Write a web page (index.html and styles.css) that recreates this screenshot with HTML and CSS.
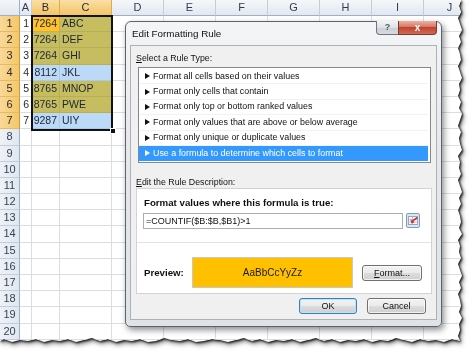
FILE: index.html
```html
<!DOCTYPE html>
<html>
<head>
<meta charset="utf-8">
<link rel="stylesheet" href="styles.css">
</head>
<body>
<div class="page">
  <div class="torn">
    <div class="sheet">
      <div class="grid">
        <div class="corner"></div><div class="ch">A</div><div class="ch sel">B</div><div class="ch sel">C</div><div class="ch">D</div><div class="ch">E</div><div class="ch">F</div><div class="ch">G</div><div class="ch">H</div><div class="ch">I</div><div class="ch">J</div>

        <div class="rh sel">1</div><div class="c n">1</div><div class="c n hi">7264</div><div class="c t ol">ABC</div><div class="c"></div><div class="c"></div><div class="c"></div><div class="c"></div><div class="c"></div><div class="c"></div><div class="c"></div>
        <div class="rh sel">2</div><div class="c n">2</div><div class="c n ol">7264</div><div class="c t ol">DEF</div><div class="c"></div><div class="c"></div><div class="c"></div><div class="c"></div><div class="c"></div><div class="c"></div><div class="c"></div>
        <div class="rh sel">3</div><div class="c n">3</div><div class="c n ol">7264</div><div class="c t ol">GHI</div><div class="c"></div><div class="c"></div><div class="c"></div><div class="c"></div><div class="c"></div><div class="c"></div><div class="c"></div>
        <div class="rh sel">4</div><div class="c n">4</div><div class="c n bl">8112</div><div class="c t bl">JKL</div><div class="c"></div><div class="c"></div><div class="c"></div><div class="c"></div><div class="c"></div><div class="c"></div><div class="c"></div>
        <div class="rh sel">5</div><div class="c n">5</div><div class="c n ol">8765</div><div class="c t ol">MNOP</div><div class="c"></div><div class="c"></div><div class="c"></div><div class="c"></div><div class="c"></div><div class="c"></div><div class="c"></div>
        <div class="rh sel">6</div><div class="c n">6</div><div class="c n ol">8765</div><div class="c t ol">PWE</div><div class="c"></div><div class="c"></div><div class="c"></div><div class="c"></div><div class="c"></div><div class="c"></div><div class="c"></div>
        <div class="rh sel">7</div><div class="c n">7</div><div class="c n bl">9287</div><div class="c t bl">UIY</div><div class="c"></div><div class="c"></div><div class="c"></div><div class="c"></div><div class="c"></div><div class="c"></div><div class="c"></div>

        <div class="rh">8</div><div class="c"></div><div class="c"></div><div class="c"></div><div class="c"></div><div class="c"></div><div class="c"></div><div class="c"></div><div class="c"></div><div class="c"></div><div class="c"></div>
        <div class="rh">9</div><div class="c"></div><div class="c"></div><div class="c"></div><div class="c"></div><div class="c"></div><div class="c"></div><div class="c"></div><div class="c"></div><div class="c"></div><div class="c"></div>
        <div class="rh">10</div><div class="c"></div><div class="c"></div><div class="c"></div><div class="c"></div><div class="c"></div><div class="c"></div><div class="c"></div><div class="c"></div><div class="c"></div><div class="c"></div>
        <div class="rh">11</div><div class="c"></div><div class="c"></div><div class="c"></div><div class="c"></div><div class="c"></div><div class="c"></div><div class="c"></div><div class="c"></div><div class="c"></div><div class="c"></div>
        <div class="rh">12</div><div class="c"></div><div class="c"></div><div class="c"></div><div class="c"></div><div class="c"></div><div class="c"></div><div class="c"></div><div class="c"></div><div class="c"></div><div class="c"></div>
        <div class="rh">13</div><div class="c"></div><div class="c"></div><div class="c"></div><div class="c"></div><div class="c"></div><div class="c"></div><div class="c"></div><div class="c"></div><div class="c"></div><div class="c"></div>
        <div class="rh">14</div><div class="c"></div><div class="c"></div><div class="c"></div><div class="c"></div><div class="c"></div><div class="c"></div><div class="c"></div><div class="c"></div><div class="c"></div><div class="c"></div>
        <div class="rh">15</div><div class="c"></div><div class="c"></div><div class="c"></div><div class="c"></div><div class="c"></div><div class="c"></div><div class="c"></div><div class="c"></div><div class="c"></div><div class="c"></div>
        <div class="rh">16</div><div class="c"></div><div class="c"></div><div class="c"></div><div class="c"></div><div class="c"></div><div class="c"></div><div class="c"></div><div class="c"></div><div class="c"></div><div class="c"></div>
        <div class="rh">17</div><div class="c"></div><div class="c"></div><div class="c"></div><div class="c"></div><div class="c"></div><div class="c"></div><div class="c"></div><div class="c"></div><div class="c"></div><div class="c"></div>
        <div class="rh">18</div><div class="c"></div><div class="c"></div><div class="c"></div><div class="c"></div><div class="c"></div><div class="c"></div><div class="c"></div><div class="c"></div><div class="c"></div><div class="c"></div>
        <div class="rh">19</div><div class="c"></div><div class="c"></div><div class="c"></div><div class="c"></div><div class="c"></div><div class="c"></div><div class="c"></div><div class="c"></div><div class="c"></div><div class="c"></div>
        <div class="rh">20</div><div class="c"></div><div class="c"></div><div class="c"></div><div class="c"></div><div class="c"></div><div class="c"></div><div class="c"></div><div class="c"></div><div class="c"></div><div class="c"></div>
      </div>
      <div class="selection"><span class="handle"></span></div>

      <div class="dialog">
        <div class="titlebar">
          <span class="title">Edit Formatting Rule</span>
          <div class="caption-btns">
            <span class="help">?</span><span class="close">x</span>
          </div>
        </div>
        <div class="client">
          <div class="label first"><u>S</u>elect a Rule Type:</div>
          <ul class="rules">
            <li>Format all cells based on their values</li>
            <li>Format only cells that contain</li>
            <li>Format only top or bottom ranked values</li>
            <li>Format only values that are above or below average</li>
            <li>Format only unique or duplicate values</li>
            <li class="selected">Use a formula to determine which cells to format</li>
          </ul>
          <div class="label second"><u>E</u>dit the Rule Description:</div>
          <div class="desc">
            <div class="desc-title">Format values where this formula is true:</div>
            <div class="formula-row">
              <div class="formula">=COUNTIF($B:$B,$B1)&gt;1</div>
              <span class="refedit">
                <svg width="14" height="15" viewBox="0 0 14 15">
                  <rect x="0.5" y="0.5" width="13" height="14" rx="1.5" fill="#dde6f0" stroke="#7f9db9"/>
                  <rect x="2.5" y="3.5" width="9" height="8" fill="#fff" stroke="#8ea7c2"/>
                  <path d="M2.5 6.5h9M2.5 9h9M6.5 3.5v8" stroke="#b3c4d8" fill="none"/>
                  <path d="M11.5 4.5L6.5 8" stroke="#d9302a" stroke-width="1.6" fill="none"/>
                  <path d="M4.5 6.5L5.2 10.5L8.8 9.2Z" fill="#d9302a"/>
                </svg>
              </span>
            </div>
            <div class="sep"></div>
            <div class="preview-row">
              <span class="preview-label">Preview:</span>
              <div class="preview">AaBbCcYyZz</div>
              <button class="btn fmt"><u>F</u>ormat...</button>
            </div>
          </div>
          <div class="actions">
            <button class="btn ok">OK</button>
            <button class="btn cancel">Cancel</button>
          </div>
        </div>
      </div>
    </div>
  </div>
</div>
</body>
</html>
```

FILE: styles.css
```css
* { box-sizing: border-box; }

body {
  margin: 0;
  background: #fff;
  font-family: "Liberation Sans", Arial, sans-serif;
}

.page {
  position: relative;
  width: 474px;
  height: 358px;
  overflow: hidden;
  background: #fff;
}

.torn {
  width: 466px;
  height: 346px;
  filter: drop-shadow(1px 1px 1px rgba(0,0,0,0.95)) drop-shadow(1px 2px 2px rgba(0,0,0,0.5));
}

.sheet {
  position: relative;
  width: 100%;
  height: 100%;
  background: #fff;
  overflow: hidden;
  clip-path: polygon(
    0 0, 461px 0, 459px 6px, 461px 12px, 458px 18px, 460px 24px, 462px 30px, 459px 36px, 461px 42px,
    458px 48px, 460px 54px, 461px 60px, 458px 66px, 460px 72px, 462px 78px, 459px 84px, 460px 90px,
    458px 96px, 461px 102px, 459px 108px, 462px 114px, 460px 120px, 458px 126px, 461px 132px, 459px 138px,
    460px 144px, 462px 150px, 458px 156px, 460px 162px, 459px 168px, 461px 174px, 458px 180px, 460px 186px,
    462px 192px, 459px 198px, 461px 204px, 458px 210px, 460px 216px, 461px 222px, 459px 228px, 462px 234px,
    458px 240px, 460px 246px, 459px 252px, 461px 258px, 458px 264px, 460px 270px, 462px 276px, 459px 282px,
    461px 288px, 458px 294px, 460px 300px, 461px 306px, 459px 312px, 462px 318px, 459px 324px, 460px 330px,
    458px 336px, 460px 341px,
    452px 339px, 444px 342px, 436px 340px, 428px 341px, 420px 339px, 412px 342px, 404px 340px, 396px 338px,
    388px 341px, 380px 340px, 372px 342px, 364px 339px, 356px 341px, 348px 340px, 340px 342px, 332px 339px,
    324px 341px, 316px 338px, 308px 340px, 300px 342px, 292px 339px, 284px 341px, 276px 340px, 268px 342px,
    260px 339px, 252px 341px, 244px 338px, 236px 340px, 228px 342px, 220px 340px, 212px 339px, 204px 341px,
    196px 342px, 188px 339px, 180px 341px, 172px 340px, 164px 338px, 156px 341px, 148px 342px, 140px 339px,
    132px 341px, 124px 340px, 116px 342px, 108px 339px, 100px 341px, 92px 338px, 84px 340px, 76px 342px,
    68px 339px, 60px 341px, 52px 340px, 44px 342px, 36px 339px, 28px 341px, 20px 340px, 12px 342px,
    4px 339px, 0 341px
  );
}

/* ---------- spreadsheet ---------- */
.grid {
  display: grid;
  grid-template-columns: 20px 12px 28px 52px repeat(7, 52px);
  grid-template-rows: 16px repeat(20, 16.2px);
  font-size: 10.5px;
  color: #1c2636;
}

.grid > div {
  border-right: 1px solid #dadde2;
  border-bottom: 1px solid #dadde2;
  line-height: 15px;
  white-space: nowrap;
  overflow: hidden;
}

.grid > .corner {
  background: linear-gradient(#f4f6f9, #e3e8ef);
  border-right-color: #9eb0c6;
  border-bottom-color: #9eb0c6;
}

.grid > .ch {
  background: linear-gradient(#f5f7fa, #e2e8f0);
  border-right-color: #c4ceda;
  border-bottom-color: #9eb0c6;
  text-align: center;
  color: #2e3d50;
  font-size: 11px;
}

.grid > .rh {
  background: linear-gradient(90deg, #eef2f7, #e1e7ef);
  border-right-color: #9eb0c6;
  border-bottom-color: #c4ceda;
  text-align: center;
  color: #33445a;
  font-size: 11px;
}

.grid > .sel {
  background: linear-gradient(#fadfa6, #f3c566);
  border-right-color: #d9ad52;
  border-bottom-color: #d9ad52;
  color: #2c2c2c;
}

.grid > .rh.sel {
  background: linear-gradient(90deg, #f9d998, #f4c768);
  border-bottom-color: #e2bb6a;
  border-right-color: #c99a40;
}

.grid > .n { text-align: right; padding-right: 2px; }
.grid > .t { padding-left: 2px; }
.grid > .ol { background: #c6bd60; border-color: #b7ae55; }
.grid > .bl { background: #bcdaf7; border-color: #a9c9e6; }
.grid > .hi { background: #fdc22c; border-color: #d8ab3f; }

.selection {
  position: absolute;
  left: 31px;
  top: 15px;
  width: 82px;
  height: 116px;
  border: 2px solid #111;
}

.handle {
  position: absolute;
  right: -5px;
  bottom: -5px;
  width: 6px;
  height: 6px;
  background: #111;
  border: 1px solid #fff;
}

/* ---------- dialog ---------- */
.dialog {
  position: absolute;
  left: 125px;
  top: 21px;
  width: 317px;
  height: 306px;
  border: 1px solid #5d636b;
  border-radius: 6px 6px 5px 5px;
  background: linear-gradient(#f4f5f7, #e6e8eb 40%, #dfe2e6);
  box-shadow: 2px 3px 6px rgba(0,0,0,0.45);
  display: flex;
  flex-direction: column;
  color: #000;
}

.titlebar {
  display: flex;
  align-items: flex-start;
  height: 23px;
  padding-left: 6px;
}

.title {
  font-size: 9.8px;
  line-height: 23px;
  color: #111;
}

.caption-btns {
  margin-left: auto;
  margin-right: 4px;
  margin-top: -1px;
  display: flex;
}

.help, .close {
  display: block;
  height: 14px;
  text-align: center;
  font-size: 9px;
  line-height: 13px;
  border: 1px solid #6f757c;
  border-top: none;
}

.help {
  width: 22px;
  border-radius: 0 0 0 4px;
  background: linear-gradient(#f3f4f6, #dde1e6 50%, #c9ced5 51%, #d7dbe0);
  color: #4d5a68;
  font-weight: bold;
  border-right: none;
}

.close {
  width: 39px;
  border-radius: 0 0 4px 0;
  background: linear-gradient(#eab1a6, #d67764 45%, #c2432c 50%, #cf6a55);
  border-color: #7d3a32;
  color: #fff;
  font-weight: bold;
  font-size: 10px;
}

.client {
  flex: 1;
  margin: 0 4px 6px 4px;
  background: #f0f0f0;
  border: 1px solid #aeb2b8;
  display: flex;
  flex-direction: column;
}

.label {
  font-size: 8.8px;
  line-height: 12px;
  margin-left: 5px;
  color: #111;
}

.label.first { margin-top: 6px; }
.label.second { margin-top: 13px; }

.rules {
  list-style: none;
  margin: 3px 5px 0 7px;
  padding: 1px 2px 1px 0;
  height: 96px;
  background: #fff;
  border: 1px solid #828790;
}

.rules li {
  height: 15.4px;
  line-height: 15px;
  font-size: 8.9px;
  padding-left: 6px;
  display: flex;
  align-items: center;
  gap: 3px;
  color: #111;
  border-bottom: 1px solid #f1f2f4;
  white-space: nowrap;
}

.rules li::before {
  content: "";
  width: 0;
  height: 0;
  border-left: 5px solid #111;
  border-top: 3.5px solid transparent;
  border-bottom: 3.5px solid transparent;
}

.rules li.selected {
  background: #3399ff;
  color: #fff;
  border-bottom-color: #3399ff;
}

.rules li.selected::before { border-left-color: #fff; }

.desc {
  margin: 0 4px 0 5px;
  background: #fff;
  border: 1px solid #d3d3d3;
  display: flex;
  flex-direction: column;
  padding-bottom: 5px;
}

.desc-title {
  font-weight: bold;
  font-size: 9.7px;
  line-height: 12px;
  padding: 8px 0 0 7px;
  color: #111;
}

.formula-row {
  display: flex;
  align-items: flex-start;
  gap: 3px;
  margin: 4px 0 0 6px;
}

.formula {
  width: 260px;
  height: 16px;
  border: 1px solid #abadb3;
  background: #fff;
  font-size: 9px;
  line-height: 14px;
  padding-left: 2px;
  color: #111;
}

.refedit {
  display: block;
  width: 14px;
  height: 15px;
}

.refedit svg { display: block; }

.sep {
  height: 1px;
  background: #e3e3e3;
  margin-top: 13px;
}

.preview-row {
  display: flex;
  align-items: center;
  margin-top: 14px;
  padding-left: 7px;
}

.preview-label {
  width: 48px;
  font-weight: bold;
  font-size: 9.7px;
  color: #111;
}

.preview {
  width: 161px;
  height: 31px;
  background: #ffc000;
  border: 1px solid #c8c8c8;
  text-align: center;
  line-height: 29px;
  font-size: 10px;
  color: #1a1a1a;
}

.btn {
  font-family: "Liberation Sans", Arial, sans-serif;
  font-size: 9px;
  color: #111;
  height: 16px;
  padding: 0;
  border: 1px solid #707070;
  border-radius: 3px;
  background: linear-gradient(#f2f2f2, #ebebeb 48%, #dddddd 50%, #cfcfcf);
  box-shadow: inset 0 0 0 1px rgba(255,255,255,0.7);
  line-height: 14px;
}

.fmt {
  width: 60px;
  margin-left: 9px;
}

.actions {
  display: flex;
  justify-content: flex-end;
  gap: 10px;
  margin-top: 4px;
  padding-right: 10px;
}

.ok {
  width: 58px;
  border-color: #3c7fb1;
  box-shadow: inset 0 0 0 1px #b8e3f8;
}

.cancel { width: 59px; }
```
